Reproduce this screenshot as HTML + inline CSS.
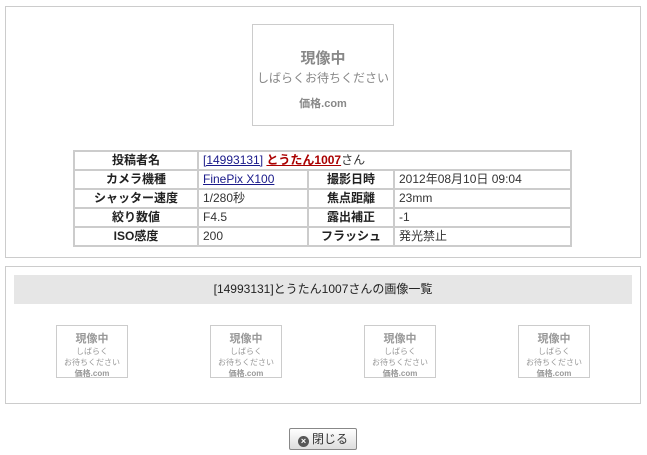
<!DOCTYPE html>
<html><head><meta charset="utf-8"><style>
*{margin:0;padding:0;box-sizing:border-box}
body{width:647px;height:455px;background:#fff;position:relative;font-family:"Liberation Sans","Noto Sans CJK JP",sans-serif;font-size:12px;color:#333;overflow:hidden}
.abs{position:absolute}
.box{border:1px solid #ccc}
.ph{position:absolute;border:1px solid #ccc;background:#fff;text-align:center;color:#999;font-weight:bold}
table{position:absolute;left:73px;top:150px;width:499px;border-collapse:collapse;border:2px solid #ccc}
td{border:2px solid #ccc;height:19px;padding:0 4px;font-size:12px;line-height:15px;white-space:nowrap}
td.h{text-align:center;font-weight:bold;color:#222}
a{color:#1a1a8a}
.btn{left:289px;top:428px;width:68px;height:22px;border:1px solid #888;border-radius:2px;background:linear-gradient(#fff,#ddd);font-size:12px;text-align:center;line-height:20px;color:#333}
.x{display:inline-block;width:11px;height:11px;border-radius:50%;background:#555;color:#fff;font-size:9px;line-height:11px;vertical-align:-1px;margin-right:3px;font-weight:bold}
</style></head><body>
<div class="abs box" style="left:5px;top:6px;width:636px;height:252px"></div>
<div class="ph" style="left:252px;top:24px;width:142px;height:102px">
<div style="font-size:15px;margin-top:22px;color:#888">現像中</div>
<div style="font-size:12px;font-weight:normal;color:#888;margin-top:1px">しばらくお待ちください</div>
<div style="font-size:11px;color:#888;margin-top:9px">価格.com</div>
</div>
<table>
<tr><td class="h" style="width:124px">投稿者名</td><td colspan="3"><a href="#">[14993131]</a> <a href="#" style="color:#a00;font-weight:bold">とうたん1007</a>さん</td></tr>
<tr><td class="h">カメラ機種</td><td style="width:110px"><a href="#">FinePix X100</a></td><td class="h" style="width:86px">撮影日時</td><td>2012年08月10日 09:04</td></tr>
<tr><td class="h">シャッター速度</td><td>1/280秒</td><td class="h">焦点距離</td><td>23mm</td></tr>
<tr><td class="h">絞り数値</td><td>F4.5</td><td class="h">露出補正</td><td>-1</td></tr>
<tr><td class="h">ISO感度</td><td>200</td><td class="h">フラッシュ</td><td>発光禁止</td></tr>
</table>
<div class="abs box" style="left:5px;top:266px;width:636px;height:138px"></div>
<div class="abs" style="left:14px;top:275px;width:618px;height:29px;background:#e6e6e6;text-align:center;line-height:29px;font-size:12px;color:#222">[14993131]とうたん1007さんの画像一覧</div>
<div class="ph" style="left:56px;top:325px;width:72px;height:53px"><div style="font-size:11px;margin-top:4px">現像中</div><div style="font-size:8px;font-weight:normal;line-height:11px">しばらく<br>お待ちください</div><div style="font-size:8px">価格.com</div></div>
<div class="ph" style="left:210px;top:325px;width:72px;height:53px"><div style="font-size:11px;margin-top:4px">現像中</div><div style="font-size:8px;font-weight:normal;line-height:11px">しばらく<br>お待ちください</div><div style="font-size:8px">価格.com</div></div>
<div class="ph" style="left:364px;top:325px;width:72px;height:53px"><div style="font-size:11px;margin-top:4px">現像中</div><div style="font-size:8px;font-weight:normal;line-height:11px">しばらく<br>お待ちください</div><div style="font-size:8px">価格.com</div></div>
<div class="ph" style="left:518px;top:325px;width:72px;height:53px"><div style="font-size:11px;margin-top:4px">現像中</div><div style="font-size:8px;font-weight:normal;line-height:11px">しばらく<br>お待ちください</div><div style="font-size:8px">価格.com</div></div>
<div class="abs btn"><span class="x">×</span>閉じる</div>
</body></html>
